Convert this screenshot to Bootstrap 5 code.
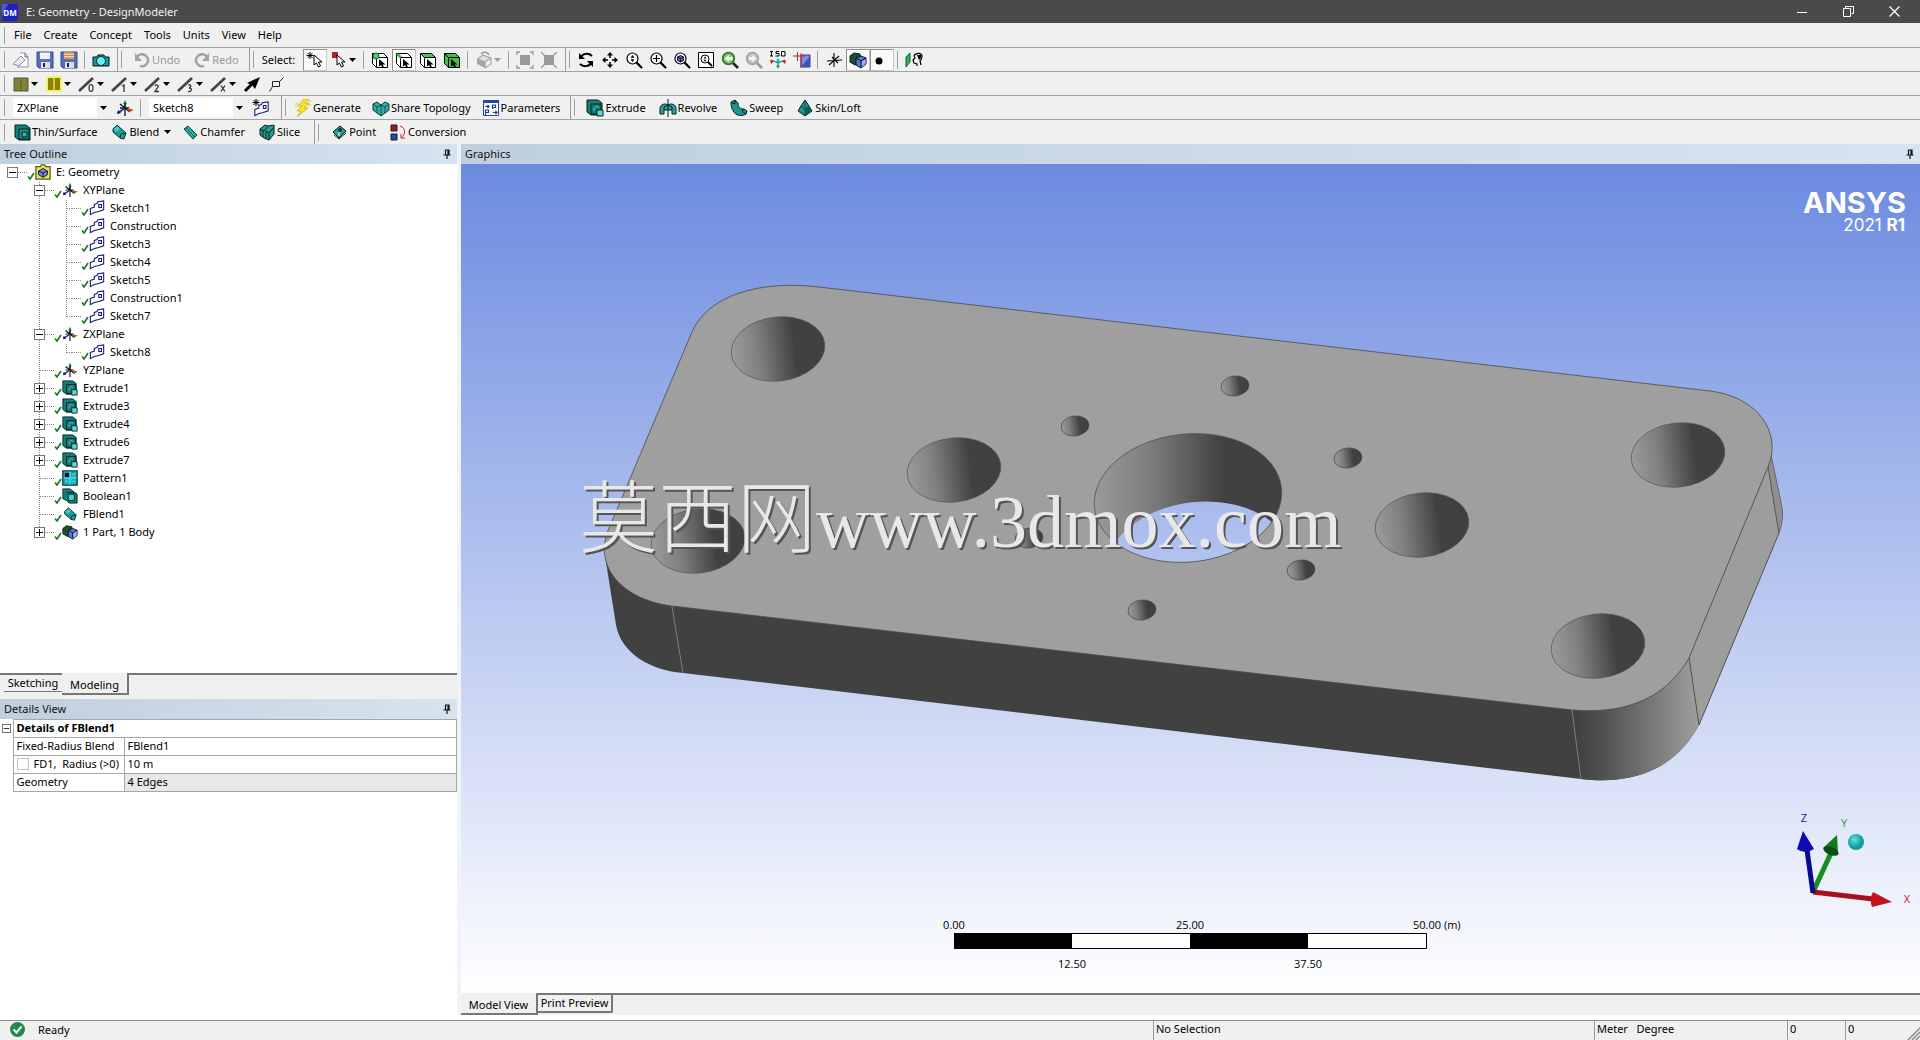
<!DOCTYPE html>
<html lang="en">
<head>
<meta charset="utf-8">
<meta name="viewport" content="width=device-width, initial-scale=1">
<title>E: Geometry - DesignModeler</title>
<link href="https://cdn.jsdelivr.net/npm/bootstrap@5.3.0/dist/css/bootstrap.min.css" rel="stylesheet">
<style>
  body{font:11px/16px "Noto Sans","Open Sans",sans-serif;color:#000;background:#fff;overflow:hidden}
  svg{display:block;flex:none}
  .ic{width:18px;height:18px}
  .titlebar{height:23px;background:#4a4a4a;color:#f2f2f2;padding:0 3px 0 2px}
  .winbtn{width:46px;height:23px;border:0;background:none;color:#fff;padding:0}
  .bar{height:24px;background:#f0f0f0;border-bottom:1px solid #a3a3a3}
  .bar.menubar{height:25px}
  .bar.lastbar{border-bottom:0}
  .grp{border-left:1px solid #9c9c9c;height:100%;padding-right:4px}
  .grp.first{border-left:1px solid #f0f0f0}
  .grp::before{content:"";width:8px;height:17px;flex:none;
    background:linear-gradient(#a0a0a0,#a0a0a0) 3px 0/1px 100% no-repeat}
  .grp.last{flex-grow:1}
  .vsep{width:8px;height:18px;flex:none;background:linear-gradient(#a0a0a0,#a0a0a0) 3px 0/1px 100% no-repeat}
  .menubar a{color:#000;text-decoration:none}
  .menubar .items{gap:12px;padding-left:5px}
  .tb{border:0;background:none;color:#000;padding:0;height:22px;width:24px;display:flex;align-items:center;justify-content:center;flex:none}
  .tb.pressed{background:#fafafa;border:1px solid #c8c8c8;border-top-color:#8f8f8f;border-left-color:#8f8f8f}
  .tb.drop{width:33px;justify-content:flex-start;padding-left:3px;gap:1px}
  .tb.txt{width:auto;padding:0 6px 0 5px;gap:1px;white-space:nowrap}
  .wide .tb.txt{padding-left:7px}
  .wide .tb.first-txt,.tb.first-txt{padding-left:4px}
  .tb:disabled{color:#9a9a9a}
  .caret{width:7px;height:4px}
  .combo{height:19px;border:0;border-radius:0;background:#fff;color:#000;appearance:none;padding:0 4px;width:84px}
  .combobox{background:#f0f0f0;gap:3px;width:96px}
  .panehead{height:20px;background:linear-gradient(90deg,#c0cfdd,#d6e4f2);padding:0 6px 0 4px;color:#111;flex:none}
  .mainrow{min-height:0}
  .leftpane{width:457px;flex:none}
  .split{width:4px;background:#f0f3fa;flex:none}
  .tree{min-height:0;overflow:hidden}
  .tree ul{list-style:none;margin:0;padding:0;position:relative}
  .tree ul ul{padding-left:27px}
  .tree ul ul::before{content:"";position:absolute;left:39px;top:0;bottom:9px;border-left:1px dotted #8a8a8a}
  .node{height:18px;padding-left:7px;padding-bottom:2px;position:relative}
  .pm{width:11px;height:11px;border:1px solid #777;background:#fff;padding:0;flex:none;display:flex}
  .leaf{width:6px;margin-left:5px;border-top:1px dotted #8a8a8a;flex:none}
  .dash{width:9px;border-top:1px dotted #8a8a8a;flex:none}
  .tick{width:8px;height:8px;margin-top:8px}
  .nic{width:16px;height:16px;margin:0 5px 0 0}
  .tabstrip{height:26px;background:#f0f0f0;flex:none}
  .tabx{border:0;background:#f0f0f0;color:#000;padding:0}
  .tabx.sk{width:62px;height:19px;border-top:2px solid #777;padding-left:4px}
  .tabx.sk span{display:block;border-bottom:1px solid #777;height:17px;line-height:15px}
  .tabx.mo{width:67px;height:22px;border-right:2px solid #777;border-bottom:2px solid #777;padding-top:4px}
  .fillline{border-top:2px solid #777}
  .details{height:316px;flex:none}
  .dtable{width:100%;table-layout:fixed;border-collapse:collapse}
  .dtable th,.dtable td{height:18px;padding:0 3px 1px;border:1px solid #a2a8a2;font-weight:400;white-space:nowrap;line-height:14px}
  .dtable td.gut{width:13px;border:0;padding:0 0 0 2px}
  .dtable .lab{width:111px}
  .dtable .pm{width:9px;height:9px}
  .dtable thead th.ttl{font-weight:700}
  .dtable td.readonly{background:#e8e8e8}
  .gutcol{width:13px}.labcol{width:111px}
  .ck{appearance:none;width:12px;height:12px;border:1px solid #c2c2c2;background:#fff;margin:0 5px 0 0;flex:none}
  .rightpane{min-width:0}
  .view{background:linear-gradient(#6c8be0,#ffffff);min-height:0;position:relative}
  .view>svg{width:100%;height:100%}
  .wmark{fill:#e8e8e8;text-shadow:2px 2px 0 #555}
  .vtabs{height:22px;background:#f0f0f0;flex:none}
  .tabx.mv{width:77px;height:22px;border-right:2px solid #777;border-bottom:2px solid #777;padding-top:4px}
  .tabx.pp{width:75px;height:20px;border:2px solid #777;border-left:0;border-radius:0 0 2px 0}
  .status{height:20px;background:#f0f0f0;border-top:1px solid #8c8c8c;margin-top:5px;flex:none}
  .ready{padding:0 0 2px 10px;gap:13px}
  .cell{height:100%;border-left:1px solid #9a9a9a;padding-left:2px;flex:none}
  .c-sel{width:441px}.c-unit{width:193px}.c-n{width:58px}.c-end{width:75px}
</style>
<script src="https://cdn.jsdelivr.net/npm/bootstrap@5.3.0/dist/js/bootstrap.bundle.min.js"></script>
</head>
<body>
<svg width="0" height="0" class="position-absolute" aria-hidden="true">
  <defs>
    <symbol id="caret" viewBox="0 0 7 4"><path d="M0 0h7L3.500 4z" fill="currentColor"/></symbol>
    <symbol id="new" viewBox="0 0 18 18"><path d="M8 2h5l3 4v10H5" fill="#fff" stroke="#8a8f9c"/><path d="M1 13 9 5l4 4-6 6-3-1z" fill="#e4e8f0" stroke="#8a8f9c"/><path d="M13 2v4h3" fill="none" stroke="#667"/></symbol>
    <symbol id="save" viewBox="0 0 18 18"><path d="M1 1h16v16H3l-2-2z" fill="#5870b8" stroke="#33488c"/><path d="M4 1.500h10V8H4z" fill="#eef2fb"/><path d="M5 11h9v6H5z" fill="#dde"/><path d="M7 12h2v4H7z" fill="#223"/></symbol>
    <symbol id="saveas" viewBox="0 0 18 18"><use href="#save"/><path d="M4 2h10M4 4.500h10M4 7h10" stroke="#d08a2c" stroke-width="1.500"/></symbol>
    <symbol id="cam" viewBox="0 0 18 18"><path d="M1 6h4l1-2h6l1 2h4v9H1z" fill="#159a9c" stroke="#111"/><circle cx="9" cy="10" r="4.500" fill="#62f0f0" stroke="#123"/></symbol>
    <symbol id="undo" viewBox="0 0 18 18"><path d="M4 6a6 6 0 1 1 3 9" fill="none" stroke="#a2a2a2" stroke-width="2.500"/><path d="M2 2v8h7z" fill="#a2a2a2"/></symbol>
    <symbol id="redo" viewBox="0 0 18 18"><path d="M14 6a6 6 0 1 0-3 9" fill="none" stroke="#a2a2a2" stroke-width="2.500"/><path d="M16 2v8H9z" fill="#a2a2a2"/></symbol>
    <symbol id="cur" viewBox="0 0 10 14"><path d="M1 1v10l2.500-2 2 4 2-1-2-4H9z" fill="#fff" stroke="#000"/></symbol>
    <symbol id="selnew" viewBox="0 0 18 18"><path d="M4 1v7M.500 4.500h7M1.500 2l5 5M6.500 2l-5 5" stroke="#000"/><use href="#cur" x="7" y="3" width="10" height="14"/></symbol>
    <symbol id="selred" viewBox="0 0 18 18"><path d="M2 1h6v6H2z" fill="#b02030"/><use href="#cur" x="6" y="3" width="10" height="14"/></symbol>
    <symbol id="wire" viewBox="0 0 18 18"><path d="M1.500 2.500h11l4 4v10h-11l-4-4zM1.500 2.500l4 4h11M5.500 6.500v10" fill="none" stroke="#000"/></symbol>
    <symbol id="curb" viewBox="0 0 7 9"><path d="M0 0v7.500L2 6l1.500 3 1.500-.800L3.700 5.500H6.500z" fill="#000"/></symbol>
    <symbol id="bx1" viewBox="0 0 18 18"><path d="M1.500 2.500h11l4 4v10h-11l-4-4z" fill="#fff"/><use href="#wire"/><circle cx="5" cy="5" r="3" fill="#5cc466" stroke="#063"/><use href="#curb" x="8" y="8" width="7" height="9"/></symbol>
    <symbol id="bx2" viewBox="0 0 18 18"><path d="M1.500 2.500h11l4 4v10h-11l-4-4z" fill="#fff"/><use href="#wire"/><path d="M2 3 6 6.500" stroke="#3fae4a" stroke-width="2.500"/><use href="#curb" x="8" y="8" width="7" height="9"/></symbol>
    <symbol id="bx3" viewBox="0 0 18 18"><path d="M1.500 2.500h11l4 4v10h-11l-4-4z" fill="#fff"/><path d="M1.500 2.500h11l4 4h-11z" fill="#4cc457"/><use href="#wire"/><use href="#curb" x="8" y="8" width="7" height="9"/></symbol>
    <symbol id="bx4" viewBox="0 0 18 18"><path d="M1.500 2.500h11l4 4v10h-11l-4-4z" fill="#3fc14b"/><use href="#wire"/><use href="#curb" x="8" y="8" width="7" height="9"/></symbol>
    <symbol id="gbox" viewBox="0 0 18 18"><path d="M2 8l6-4 8 3-6 4z" fill="#ddd" stroke="#999"/><path d="M2 8l8 3v6l-8-4zM16 7v6l-6 4v-6z" fill="#a5a5a5"/><path d="M10 11l6-4v6l-6 4z" fill="#eee" stroke="#999"/><path d="M6 3c3-3 7-2 8 1" stroke="#999" fill="none" stroke-width="1.500"/></symbol>
    <symbol id="ext1" viewBox="0 0 18 18"><path d="M4 4h10v10H4z" fill="#999"/><path d="M1 4V1h3M14 1h3v3M17 14v3h-3M4 17H1v-3" fill="none" stroke="#999" stroke-width="1.300"/></symbol>
    <symbol id="ext2" viewBox="0 0 18 18"><path d="M4 4h10v10H4z" fill="#999"/><path d="M1 1l4 4M17 1l-4 4M17 17l-4-4M1 17l4-4" stroke="#999" stroke-width="1.300"/></symbol>
    <symbol id="rot" viewBox="0 0 18 18"><path d="M4 6c2-4 8-4 11-1M14 12c-2 4-8 4-11 1" fill="none" stroke="#000" stroke-width="2"/><path d="M2 2v6h6zM16 16v-6h-6z"/></symbol>
    <symbol id="pan" viewBox="0 0 18 18"><path d="M9 3v4M9 11v4M3 9h4M11 9h4" stroke="#000" stroke-width="1.500"/><path d="M9 1l3 3.500H6zM9 17l3-3.500H6zM1 9l3.500-3v6zM17 9l-3.500-3v6z"/></symbol>
    <symbol id="lens" viewBox="0 0 18 18"><path d="M11 11l6 6" stroke="#000" stroke-width="2.300"/><circle cx="7.500" cy="7.500" r="5.500" fill="#fff" stroke="#000" stroke-width="1.200"/></symbol>
    <symbol id="z1" viewBox="0 0 18 18"><use href="#lens"/><path d="M7.500 4l2 2.800h-4zM7.500 11l2-2.800h-4z"/></symbol>
    <symbol id="z2" viewBox="0 0 18 18"><use href="#lens"/><path d="M7.500 4v7M4 7.500h7" stroke="#000" stroke-width="1.200"/></symbol>
    <symbol id="z3" viewBox="0 0 18 18"><use href="#lens"/><path d="M4.500 6l3-1.500 3 1.500v3.500l-3 1.500-3-1.500z" fill="#5a62c8" stroke="#112"/><path d="M4.500 6l3 1.500 3-1.500M7.500 8v3" fill="none" stroke="#112"/></symbol>
    <symbol id="z4" viewBox="0 0 18 18"><path d="M1.500 1.500h15v15h-15z" fill="#fff" stroke="#000"/><circle cx="8" cy="8" r="4" fill="none" stroke="#000"/><path d="M11 11l4 4" stroke="#000" stroke-width="1.800"/><path d="M8 5.500 9.500 7.600h-3zM8 10.800l1.500-2.100h-3z"/></symbol>
    <symbol id="z5" viewBox="0 0 18 18"><path d="M11 11l6 6" stroke="#223" stroke-width="2.600"/><circle cx="7.500" cy="7.500" r="5.800" fill="#7fce6a" stroke="#2f7a2a" stroke-width="1.800"/><path d="M3.500 7.500 8 4v2h3.500v3H8v2z" fill="#fff"/></symbol>
    <symbol id="z6" viewBox="0 0 18 18"><path d="M11 11l6 6" stroke="#999" stroke-width="2.600"/><circle cx="7.500" cy="7.500" r="5.800" fill="#c4c4c4" stroke="#a5a5a5" stroke-width="1.800"/><path d="M11.500 7.500 7 4v2H4v3h3v2z" fill="#f5f5f5"/></symbol>
    <symbol id="iso" viewBox="0 0 18 18"><path d="M2.500 0v5M1 .500h3M1 5h3M10 .500H7V2.500h3V5H6.500M12.500.500H16V5h-3.500z" fill="none" stroke="#000"/><path d="M9 17v-7M9 12 2 9M9 12l7-3" stroke="#188" stroke-width="1.200"/><path d="M7 14.500h4l-2 3z" fill="#1a9a8a"/><path d="M1 9l4 1-3 3zM17 9l-4 1 3 3z" fill="#c22"/><path d="M7 10l2-3 2 3-2 2z" fill="#2bb"/></symbol>
    <symbol id="look" viewBox="0 0 18 18"><path d="M8 4h9v12H8z" fill="#7d90e4" stroke="#223a90"/><path d="M8 16 17 5v11z" fill="#3f54b4"/><path d="M0 5h12M4.500 1v9M8 2v15" stroke="#c02020"/></symbol>
    <symbol id="star" viewBox="0 0 18 18"><path d="M9 2v14M2 10l15-1M4 14 14 5M7 6l6 6" stroke="#000" stroke-width="1.100"/></symbol>
    <symbol id="cubes" viewBox="0 0 18 18"><path d="M1 5l4-3 6 1 1 8-6 3-5-3z" fill="#234a34" stroke="#021"/><path d="M7 7l5-2 5 2v6l-5 4-5-3z" fill="#5a78d8" stroke="#012"/><path d="M12.500 10.500 16.500 8v5l-4 3z" fill="#9cb4f6"/><path d="M7 7l5 3 5-3M12 10v6" fill="none" stroke="#012"/></symbol>
    <symbol id="dot" viewBox="0 0 18 18"><circle cx="6" cy="10" r="3.500"/></symbol>
    <symbol id="mask" viewBox="0 0 18 18"><path d="M1 6l4-4v9l-4 5z" fill="#35b545" stroke="#064"/><path d="M9 5c1-3 8-4 8 0s-1 3-2 5l1 4M9 5l1 2-2 2 1 3 3 1v2" fill="none" stroke="#000" stroke-width="1.200"/><path d="M12 4h4v3l-2 2z"/></symbol>
    <symbol id="sq1" viewBox="0 0 18 18"><path d="M2 3h14v13H2z" fill="#80823c" stroke="#555a20"/><path d="M9 3v13" stroke="#5c5f22"/></symbol>
    <symbol id="sq2" viewBox="0 0 18 18"><path d="M1 1h16v16H1z" fill="#f4f06a"/><path d="M3 3h12v12H3z" fill="#8b8200"/><path d="M9 3v12" stroke="#e6df3c" stroke-width="1.500"/></symbol>
    <symbol id="slash" viewBox="0 0 18 18"><path d="M1 16 15 3" stroke="#444" stroke-width="2.600"/></symbol>
    <symbol id="s0" viewBox="0 0 18 18"><use href="#slash"/><ellipse cx="13" cy="13" rx="2" ry="3.500" fill="#f0f0f0" stroke="#333" stroke-width="1.200"/></symbol>
    <symbol id="s1" viewBox="0 0 18 18"><use href="#slash"/><path d="M11 11l2-1v7" fill="none" stroke="#333" stroke-width="1.300"/></symbol>
    <symbol id="s2" viewBox="0 0 18 18"><use href="#slash"/><path d="M11 11c1-2 4-1 3 1l-3 4.500h4" fill="none" stroke="#333" stroke-width="1.300"/></symbol>
    <symbol id="s3" viewBox="0 0 18 18"><use href="#slash"/><path d="M11 10c3-1 4 2 1 3 4 0 3 4-1 3.500" fill="none" stroke="#333" stroke-width="1.300"/></symbol>
    <symbol id="sx" viewBox="0 0 18 18"><use href="#slash"/><path d="M11 10.500l4 6M15 10.500l-4 6" stroke="#333" stroke-width="1.300"/></symbol>
    <symbol id="arr" viewBox="0 0 18 18"><path d="M2 16 9 9" stroke="#000" stroke-width="3"/><path d="M17 2 12 14 9 10 4 8z"/></symbol>
    <symbol id="vtx" viewBox="0 0 18 18"><path d="M5.500 6.500h7v5h-7zM12.500 6.500l4-4M5.500 11.500l-3 5" fill="none" stroke="#222"/></symbol>
    <symbol id="axes" viewBox="0 0 18 18"><path d="M9 9V2" stroke="#2c9a4a" stroke-width="2"/><path d="M9 1l2 4H7z" fill="#2c9a4a"/><path d="M4 5l10 8M9 4v13M4 9h9" stroke="#111" stroke-width="1.300"/><path d="M9 9l-7 5" stroke="#22308a" stroke-width="1.600"/><path d="M1 15l1-4 3 3z" fill="#111a60"/><path d="M12 9l6 2-5 2z" fill="#cc4422"/></symbol>
    <symbol id="sketch" viewBox="0 0 18 18"><path d="M1.500 9.500 6 8V5l3-1 1-2 6.500-1v10L11 13l-5 1-4.500 2.500z" fill="#fff" stroke="#16167c" stroke-width="1.200"/><path d="M11 5h3v3.500h-3z" fill="none" stroke="#16167c" stroke-width="1.200"/></symbol>
    <symbol id="newsk" viewBox="0 0 18 18"><use href="#sketch" x="1" y="2" width="17" height="16"/><path d="M4 0v7M.500 3.500h7M1.500 1l5 5M6.500 1l-5 5" stroke="#000"/></symbol>
    <symbol id="gen" viewBox="0 0 18 18"><path d="M10 0 4 7h4l-5 5h4l-4 6 11-9h-4l5-5h-4l4-4z" fill="#fbe522" stroke="#b89a00" stroke-width=".6"/><path d="M14 2h3M14 6h3M1 5h3M1 8h2" stroke="#d8c41a"/></symbol>
    <symbol id="share" viewBox="0 0 18 18"><path d="M1 5l4-2 4 3 4-3 4 2v6l-8 6-8-6z" fill="#3aaca6" stroke="#053a38"/><path d="M1 5l4 3 4-2 4 2 4-3M9 6v11M5 8v6M13 8v6" stroke="#053a38" fill="none" stroke-width=".8"/></symbol>
    <symbol id="par" viewBox="0 0 18 18"><path d="M1.500 1.500h15v15h-15z" fill="#fff" stroke="#1e4a9c"/><path d="M1 1h16v3H1z" fill="#1e4a9c"/><path d="M10.500 10V6h3v2.500h-3M3.500 16v-5h3v2.500h-3M3 7.500h4M5.500 6 7 7.500 5.500 9M11 13.500h4M13.500 12l1.500 1.500-1.500 1.500" fill="none" stroke="#123c8c" stroke-width="1.200"/></symbol>
    <symbol id="extr" viewBox="0 0 18 18"><path d="M1 1h11l4 3v12H5l-4-3z" fill="#12807a" stroke="#022"/><path d="M5 5h10v10H5z" fill="#157873" stroke="#022"/><path d="M8 12V9l3-2 2 2" fill="none" stroke="#5cc8d8"/><path d="M11 11h6v6h-6z" fill="#66d4d2" stroke="#022"/></symbol>
    <symbol id="rev" viewBox="0 0 18 18"><path d="M1 10c0-5 5-6 8-4 3-2 8-1 8 4v5h-4v-4H5v4H1z" fill="#2fa39c" stroke="#022"/><path d="M9 0v18" stroke="#022"/><path d="M5 11V8l4-2 4 2v3" stroke="#022" fill="none"/></symbol>
    <symbol id="swp" viewBox="0 0 18 18"><path d="M1 3l4-2 3 3c0 4 2 6 6 6l3 2-1 3c-7 4-15 0-15-12z" fill="#1f938c" stroke="#022"/><path d="M5 1v4L2 4M14 10l-2 2 4 3" fill="none" stroke="#022"/></symbol>
    <symbol id="skin" viewBox="0 0 18 18"><path d="M9 1l4 6 3 5-7 5-7-5 3-5z" fill="#1f938c" stroke="#022"/><path d="M9 10l4-3 3 5-7 5z" fill="#0d605c"/><path d="M9 1v16M5 7l4 3 4-3" stroke="#055" fill="none"/></symbol>
    <symbol id="thin" viewBox="0 0 18 18"><path d="M2 2h11l4 3v12H6l-4-3z" fill="#12807a" stroke="#022"/><path d="M6 6h10v10H6z" fill="#1f938c" stroke="#022"/><path d="M9 9h5v5H9z" fill="#3aaca6" stroke="#022"/></symbol>
    <symbol id="blend" viewBox="0 0 18 18"><path d="M3 6l4-4 9 8-2 6-4-1-7-6z" fill="#1f9c94" stroke="#033"/><path d="M4 6l3-3 3 3-4 3z" fill="#4cc8be"/><path d="M10 15l1-4 5-1" fill="none" stroke="#033"/></symbol>
    <symbol id="cham" viewBox="0 0 18 18"><path d="M3 6l4-3 9 9-4 4z" fill="#2cae9e" stroke="#044"/><path d="M5 5l9 9" stroke="#0a6a60"/></symbol>
    <symbol id="slice" viewBox="0 0 18 18"><path d="M2 6l5-4 3 1 6-1v9l-5 6-5-2-4-3z" fill="#2a9c94" stroke="#022"/><path d="M2 6l4 2 4-5M5 8v6M8 8l3 2 5-6M8 8v7M11 10v6" fill="none" stroke="#022"/></symbol>
    <symbol id="pt" viewBox="0 0 18 18"><path d="M3 9 10 3l6 5-7 7z" fill="#2a9c96" stroke="#022"/><path d="M4 12l5 4 7-6" fill="none" stroke="#333"/><circle cx="10" cy="7" r="2" fill="#134"/><path d="M9 9v4" stroke="#fff"/></symbol>
    <symbol id="conv" viewBox="0 0 18 18"><path d="M2 2h6v6H2z" fill="#8c1f2e" stroke="#411"/><path d="M2 11h6v6H2z" fill="#1c4f9a" stroke="#124"/><path d="M11 3c6 2 6 8 1 12M12 11v4h4" fill="none" stroke="#d02030"/></symbol>
    <symbol id="root" viewBox="0 0 18 18"><path d="M1 3h5l1-2h4l1 2h5v14H1z" fill="#e8e25a" stroke="#555a20" stroke-width="1.400"/><path d="M4 8l5-3 5 3v4l-5 3-5-3z" fill="#7d86de" stroke="#112"/><path d="M4 8l5 2 5-2M9 10v5" fill="none" stroke="#112"/></symbol>
    <symbol id="patt" viewBox="0 0 18 18"><path d="M1 1h16v16H1z" fill="#35d8d8" stroke="#034" stroke-width="1.500"/><path d="M3 3h5v5H3z" fill="#012"/><path d="M11 3h4v4h-4zM3 11h4v4H3zM11 11h4v4h-4z" fill="none" stroke="#078" stroke-dasharray="2 1"/></symbol>
    <symbol id="bool" viewBox="0 0 18 18"><path d="M1 1h8l4 3 4 3v10H8l-3-3-4-2z" fill="#12807a" stroke="#022"/><path d="M5 5h8v9" fill="none" stroke="#022"/><path d="M7 7h7v7H7z" fill="#40d4d0" stroke="#022"/></symbol>
    <symbol id="tick" viewBox="0 0 8 8"><path d="M1 4.500 3 7l4-6" fill="none" stroke="#1e7d28" stroke-width="1.700"/></symbol>
    <symbol id="pin" viewBox="0 0 8 10"><path d="M2 1h4v5M2.500 1v5M0.500 6h7M4 6v4M5 1v5" fill="none" stroke="#111" stroke-width="1.200"/></symbol>
    <symbol id="minus" viewBox="0 0 9 9"><path d="M1 4.500h7" stroke="#000"/></symbol>
    <symbol id="plus" viewBox="0 0 9 9"><path d="M1 4.500h7M4.500 1v7" stroke="#000"/></symbol>
  </defs>
</svg>
<div class="vh-100 d-flex flex-column">
  <header class="titlebar d-flex align-items-center">
    <svg width="16" height="18" viewBox="0 0 16 18"><path d="M0 1h16v15l-3 2H2l-2-3z" fill="#1c22c4"/><path d="M0 1h6l-4 8-2 5z" fill="#4a58ea"/><text x="8" y="13" text-anchor="middle" font-size="8" font-weight="700" fill="#fff" font-family="Open Sans,sans-serif">DM</text></svg>
    <span class="ms-1 ps-1">E: Geometry - DesignModeler</span>
    <div class="ms-auto d-flex">
      <button class="winbtn" aria-label="Minimize"><svg class="mx-auto" width="10" height="10"><path d="M0 5.500h10" stroke="#fff"/></svg></button>
      <button class="winbtn" aria-label="Restore"><svg class="mx-auto" width="11" height="11"><path d="M.5 2.500h7v8h-7zM2.500 2.500v-2h8v7h-2" fill="none" stroke="#fff"/></svg></button>
      <button class="winbtn" aria-label="Close"><svg class="mx-auto" width="11" height="11"><path d="M.5.5l10 10M10.500.5l-10 10" stroke="#fff" stroke-width="1.300"/></svg></button>
    </div>
  </header>
  <nav class="bar menubar d-flex align-items-center">
    <div class="grp first last d-flex align-items-center">
      <div class="items d-flex"><a href="#">File</a><a href="#">Create</a><a href="#">Concept</a><a href="#">Tools</a><a href="#">Units</a><a href="#">View</a><a href="#">Help</a></div>
    </div>
  </nav>
  <div class="bar d-flex align-items-center" role="toolbar" aria-label="Standard">
    <div class="grp first d-flex align-items-center">
      <button class="tb" aria-label="New"><svg class="ic"><use href="#new"/></svg></button>
      <button class="tb" aria-label="Save"><svg class="ic"><use href="#save"/></svg></button>
      <button class="tb" aria-label="Export"><svg class="ic"><use href="#saveas"/></svg></button>
      <span class="vsep"></span>
      <button class="tb" aria-label="Image capture"><svg class="ic"><use href="#cam"/></svg></button>
    </div>
    <div class="grp wide d-flex align-items-center">
      <button class="tb txt" disabled><svg class="ic"><use href="#undo"/></svg>Undo</button>
      <button class="tb txt" disabled><svg class="ic"><use href="#redo"/></svg>Redo</button>
    </div>
    <div class="grp d-flex align-items-center">
      <span class="pe-1 me-1 ps-1">Select:</span>
      <button class="tb pressed" aria-label="New selection"><svg class="ic"><use href="#selnew"/></svg></button>
      <button class="tb drop" aria-label="Select mode"><svg class="ic"><use href="#selred"/></svg><svg class="caret"><use href="#caret"/></svg></button>
      <span class="vsep"></span>
      <button class="tb" aria-label="Points"><svg class="ic"><use href="#bx1"/></svg></button>
      <button class="tb pressed" aria-label="Edges"><svg class="ic"><use href="#bx2"/></svg></button>
      <button class="tb" aria-label="Faces"><svg class="ic"><use href="#bx3"/></svg></button>
      <button class="tb" aria-label="Bodies"><svg class="ic"><use href="#bx4"/></svg></button>
      <span class="vsep"></span>
      <button class="tb drop" disabled aria-label="Extend selection"><svg class="ic"><use href="#gbox"/></svg><svg class="caret"><use href="#caret"/></svg></button>
      <span class="vsep"></span>
      <button class="tb" disabled aria-label="Expand"><svg class="ic"><use href="#ext1"/></svg></button>
      <button class="tb" disabled aria-label="Shrink"><svg class="ic"><use href="#ext2"/></svg></button>
    </div>
    <div class="grp last d-flex align-items-center">
      <button class="tb" aria-label="Rotate"><svg class="ic"><use href="#rot"/></svg></button>
      <button class="tb" aria-label="Pan"><svg class="ic"><use href="#pan"/></svg></button>
      <button class="tb" aria-label="Zoom"><svg class="ic"><use href="#z1"/></svg></button>
      <button class="tb" aria-label="Box zoom"><svg class="ic"><use href="#z2"/></svg></button>
      <button class="tb" aria-label="Zoom to fit"><svg class="ic"><use href="#z3"/></svg></button>
      <button class="tb" aria-label="Magnifier"><svg class="ic"><use href="#z4"/></svg></button>
      <button class="tb" aria-label="Previous view"><svg class="ic"><use href="#z5"/></svg></button>
      <button class="tb" disabled aria-label="Next view"><svg class="ic"><use href="#z6"/></svg></button>
      <button class="tb" aria-label="Isometric view"><svg class="ic"><use href="#iso"/></svg></button>
      <button class="tb" aria-label="Look at"><svg class="ic"><use href="#look"/></svg></button>
      <span class="vsep"></span>
      <button class="tb" aria-label="Display plane"><svg class="ic"><use href="#star"/></svg></button>
      <button class="tb pressed" aria-label="Display model"><svg class="ic"><use href="#cubes"/></svg></button>
      <button class="tb pressed" aria-label="Display points"><svg class="ic"><use href="#dot"/></svg></button>
      <span class="vsep"></span>
      <button class="tb" aria-label="Look at face"><svg class="ic"><use href="#mask"/></svg></button>
    </div>
  </div>
  <div class="bar d-flex align-items-center" role="toolbar" aria-label="Display">
    <div class="grp first last d-flex align-items-center">
      <button class="tb drop" aria-label="Face color"><svg class="ic"><use href="#sq1"/></svg><svg class="caret"><use href="#caret"/></svg></button>
      <button class="tb drop" aria-label="Edge color"><svg class="ic"><use href="#sq2"/></svg><svg class="caret"><use href="#caret"/></svg></button>
      <button class="tb drop" aria-label="Free edges"><svg class="ic"><use href="#s0"/></svg><svg class="caret"><use href="#caret"/></svg></button>
      <button class="tb drop" aria-label="Single edges"><svg class="ic"><use href="#s1"/></svg><svg class="caret"><use href="#caret"/></svg></button>
      <button class="tb drop" aria-label="Double edges"><svg class="ic"><use href="#s2"/></svg><svg class="caret"><use href="#caret"/></svg></button>
      <button class="tb drop" aria-label="Triple edges"><svg class="ic"><use href="#s3"/></svg><svg class="caret"><use href="#caret"/></svg></button>
      <button class="tb drop" aria-label="Multiple edges"><svg class="ic"><use href="#sx"/></svg><svg class="caret"><use href="#caret"/></svg></button>
      <button class="tb" aria-label="Edge direction"><svg class="ic"><use href="#arr"/></svg></button>
      <button class="tb" aria-label="Vertices"><svg class="ic"><use href="#vtx"/></svg></button>
    </div>
  </div>
  <div class="bar d-flex align-items-center" role="toolbar" aria-label="Planes and features">
    <div class="grp first d-flex align-items-center">
      <div class="combobox d-flex align-items-center ms-1"><select class="combo" aria-label="Active plane"><option>ZXPlane</option><option>XYPlane</option><option>YZPlane</option></select><svg class="caret"><use href="#caret"/></svg></div>
      <button class="tb ms-1" aria-label="New plane"><svg class="ic"><use href="#axes"/></svg></button>
      <span class="vsep"></span>
      <div class="combobox d-flex align-items-center ms-1"><select class="combo" aria-label="Active sketch"><option>Sketch8</option><option>Sketch7</option></select><svg class="caret"><use href="#caret"/></svg></div>
      <button class="tb ms-1" aria-label="New sketch"><svg class="ic"><use href="#newsk"/></svg></button>
    </div>
    <div class="grp ms-1 d-flex align-items-center">
      <button class="tb txt first-txt"><svg class="ic"><use href="#gen"/></svg>Generate</button>
      <button class="tb txt"><svg class="ic"><use href="#share"/></svg>Share Topology</button>
      <button class="tb txt"><svg class="ic"><use href="#par"/></svg>Parameters</button>
    </div>
    <div class="grp last wide d-flex align-items-center">
      <button class="tb txt"><svg class="ic"><use href="#extr"/></svg>Extrude</button>
      <button class="tb txt"><svg class="ic"><use href="#rev"/></svg>Revolve</button>
      <button class="tb txt"><svg class="ic"><use href="#swp"/></svg>Sweep</button>
      <button class="tb txt"><svg class="ic"><use href="#skin"/></svg>Skin/Loft</button>
    </div>
  </div>
  <div class="bar lastbar wide d-flex align-items-center" role="toolbar" aria-label="Modify">
    <div class="grp first d-flex align-items-center">
      <button class="tb txt first-txt"><svg class="ic"><use href="#thin"/></svg>Thin/Surface</button>
      <button class="tb txt"><svg class="ic"><use href="#blend"/></svg>Blend<svg class="caret ms-1"><use href="#caret"/></svg></button>
      <button class="tb txt first-txt"><svg class="ic"><use href="#cham"/></svg>Chamfer</button>
      <button class="tb txt"><svg class="ic"><use href="#slice"/></svg>Slice</button>
    </div>
    <div class="grp ms-1 last d-flex align-items-center">
      <button class="tb txt"><svg class="ic"><use href="#pt"/></svg>Point</button>
      <button class="tb txt"><svg class="ic"><use href="#conv"/></svg>Conversion</button>
    </div>
  </div>

  <main class="mainrow d-flex flex-grow-1">
    <aside class="leftpane d-flex flex-column">
      <div class="panehead d-flex align-items-center justify-content-between"><span>Tree Outline</span><svg width="8" height="10"><use href="#pin"/></svg></div>
      <div class="tree flex-grow-1">
        <ul>
          <li>
            <div class="node d-flex align-items-center"><button class="pm" aria-label="Collapse"><svg width="9" height="9"><use href="#minus"/></svg></button><span class="dash"></span><svg class="tick"><use href="#tick"/></svg><svg class="nic"><use href="#root"/></svg>E: Geometry</div>
            <ul>
              <li>
                <div class="node d-flex align-items-center"><button class="pm" aria-label="Collapse"><svg width="9" height="9"><use href="#minus"/></svg></button><span class="dash"></span><svg class="tick"><use href="#tick"/></svg><svg class="nic"><use href="#axes"/></svg>XYPlane</div>
                <ul>
                  <li class="node d-flex align-items-center"><span class="leaf"></span><span class="dash"></span><svg class="tick"><use href="#tick"/></svg><svg class="nic"><use href="#sketch"/></svg>Sketch1</li>
                  <li class="node d-flex align-items-center"><span class="leaf"></span><span class="dash"></span><svg class="tick"><use href="#tick"/></svg><svg class="nic"><use href="#sketch"/></svg>Construction</li>
                  <li class="node d-flex align-items-center"><span class="leaf"></span><span class="dash"></span><svg class="tick"><use href="#tick"/></svg><svg class="nic"><use href="#sketch"/></svg>Sketch3</li>
                  <li class="node d-flex align-items-center"><span class="leaf"></span><span class="dash"></span><svg class="tick"><use href="#tick"/></svg><svg class="nic"><use href="#sketch"/></svg>Sketch4</li>
                  <li class="node d-flex align-items-center"><span class="leaf"></span><span class="dash"></span><svg class="tick"><use href="#tick"/></svg><svg class="nic"><use href="#sketch"/></svg>Sketch5</li>
                  <li class="node d-flex align-items-center"><span class="leaf"></span><span class="dash"></span><svg class="tick"><use href="#tick"/></svg><svg class="nic"><use href="#sketch"/></svg>Construction1</li>
                  <li class="node d-flex align-items-center"><span class="leaf"></span><span class="dash"></span><svg class="tick"><use href="#tick"/></svg><svg class="nic"><use href="#sketch"/></svg>Sketch7</li>
                </ul>
              </li>
              <li>
                <div class="node d-flex align-items-center"><button class="pm" aria-label="Collapse"><svg width="9" height="9"><use href="#minus"/></svg></button><span class="dash"></span><svg class="tick"><use href="#tick"/></svg><svg class="nic"><use href="#axes"/></svg>ZXPlane</div>
                <ul>
                  <li class="node d-flex align-items-center"><span class="leaf"></span><span class="dash"></span><svg class="tick"><use href="#tick"/></svg><svg class="nic"><use href="#sketch"/></svg>Sketch8</li>
                </ul>
              </li>
              <li class="node d-flex align-items-center"><span class="leaf"></span><span class="dash"></span><svg class="tick"><use href="#tick"/></svg><svg class="nic"><use href="#axes"/></svg>YZPlane</li>
              <li class="node d-flex align-items-center"><button class="pm" aria-label="Expand"><svg width="9" height="9"><use href="#plus"/></svg></button><span class="dash"></span><svg class="tick"><use href="#tick"/></svg><svg class="nic"><use href="#extr"/></svg>Extrude1</li>
              <li class="node d-flex align-items-center"><button class="pm" aria-label="Expand"><svg width="9" height="9"><use href="#plus"/></svg></button><span class="dash"></span><svg class="tick"><use href="#tick"/></svg><svg class="nic"><use href="#extr"/></svg>Extrude3</li>
              <li class="node d-flex align-items-center"><button class="pm" aria-label="Expand"><svg width="9" height="9"><use href="#plus"/></svg></button><span class="dash"></span><svg class="tick"><use href="#tick"/></svg><svg class="nic"><use href="#extr"/></svg>Extrude4</li>
              <li class="node d-flex align-items-center"><button class="pm" aria-label="Expand"><svg width="9" height="9"><use href="#plus"/></svg></button><span class="dash"></span><svg class="tick"><use href="#tick"/></svg><svg class="nic"><use href="#extr"/></svg>Extrude6</li>
              <li class="node d-flex align-items-center"><button class="pm" aria-label="Expand"><svg width="9" height="9"><use href="#plus"/></svg></button><span class="dash"></span><svg class="tick"><use href="#tick"/></svg><svg class="nic"><use href="#extr"/></svg>Extrude7</li>
              <li class="node d-flex align-items-center"><span class="leaf"></span><span class="dash"></span><svg class="tick"><use href="#tick"/></svg><svg class="nic"><use href="#patt"/></svg>Pattern1</li>
              <li class="node d-flex align-items-center"><span class="leaf"></span><span class="dash"></span><svg class="tick"><use href="#tick"/></svg><svg class="nic"><use href="#bool"/></svg>Boolean1</li>
              <li class="node d-flex align-items-center"><span class="leaf"></span><span class="dash"></span><svg class="tick"><use href="#tick"/></svg><svg class="nic"><use href="#blend"/></svg>FBlend1</li>
              <li class="node d-flex align-items-center"><button class="pm" aria-label="Expand"><svg width="9" height="9"><use href="#plus"/></svg></button><span class="dash"></span><svg class="tick"><use href="#tick"/></svg><svg class="nic"><use href="#cubes"/></svg>1 Part, 1 Body</li>
            </ul>
          </li>
        </ul>
      </div>
      <div class="tabstrip d-flex align-items-start">
        <button class="tabx sk"><span>Sketching</span></button>
        <button class="tabx mo">Modeling</button>
        <div class="fillline flex-grow-1"></div>
      </div>
      <section class="details">
        <div class="panehead d-flex align-items-center justify-content-between"><span>Details View</span><svg width="8" height="10"><use href="#pin"/></svg></div>
        <table class="dtable">
          <colgroup><col class="gutcol"><col class="labcol"><col></colgroup>
          <thead><tr><td class="gut"><button class="pm" aria-label="Collapse"><svg width="7" height="7"><use href="#minus"/></svg></button></td><th class="ttl" colspan="2">Details of FBlend1</th></tr></thead>
          <tbody>
            <tr><td class="gut"></td><th class="lab" scope="row">Fixed-Radius Blend</th><td>FBlend1</td></tr>
            <tr><td class="gut"></td><th class="lab" scope="row"><label class="d-flex align-items-center" for="fd1"><input class="ck" type="checkbox" id="fd1">FD1,&nbsp; Radius (&gt;0)</label></th><td>10 m</td></tr>
            <tr><td class="gut"></td><th class="lab" scope="row">Geometry</th><td class="readonly">4 Edges</td></tr>
          </tbody>
        </table>
      </section>
    </aside>
    <div class="split"></div>
    <section class="rightpane flex-grow-1 d-flex flex-column">
      <div class="panehead d-flex align-items-center justify-content-between"><span>Graphics</span><svg width="8" height="10"><use href="#pin"/></svg></div>
      <div class="view flex-grow-1">
        <svg viewBox="461 164 1459 829" preserveAspectRatio="xMidYMid meet" font-family="Open Sans, Noto Sans, sans-serif" font-size="11">
          <defs>
            <linearGradient id="gbg" gradientUnits="userSpaceOnUse" x1="0" y1="164" x2="0" y2="993"><stop offset="0" stop-color="#6c8be0"/><stop offset="1" stop-color="#fff"/></linearGradient>
            <linearGradient id="gh"><stop offset="0" stop-color="#9c9c9c"/><stop offset=".3" stop-color="#7e7e7e"/><stop offset=".68" stop-color="#414141"/><stop offset="1" stop-color="#404040"/></linearGradient>
            <linearGradient id="gf" gradientUnits="userSpaceOnUse" x1="1576" y1="0" x2="1696" y2="0"><stop offset="0" stop-color="#414141"/><stop offset=".2" stop-color="#4e4e4e"/><stop offset="1" stop-color="#9c9c9c"/></linearGradient>
            <radialGradient id="gs" cx=".4" cy=".35"><stop offset="0" stop-color="#5fe0e0"/><stop offset="1" stop-color="#0f9a9c"/></radialGradient>
            <clipPath id="cb"><ellipse cx="1188" cy="498" rx="94" ry="64" transform="rotate(-6 1188 498)"/></clipPath>
            <g id="hole"><ellipse rx="47" ry="32" transform="rotate(-7)" fill="url(#gh)" stroke="#555" stroke-width=".7"/></g>
            <g id="pin0"><ellipse rx="14" ry="10" transform="rotate(-7)" fill="url(#gh)" stroke="#444" stroke-width=".7"/></g>
          </defs>
          <path d="M605 550 606 562 616 625C621 652 648 670 683 673L1581 779C1640 786 1678 764 1699 725L1779 533Q1785 517 1781 502L1771 455 1689 600 1572 650z" fill="#414141"/>
          <path d="M1572 710 1581 779C1640 786 1678 764 1699 725L1689 657z" fill="url(#gf)"/>
          <path d="M1689 657 1699 725 1779 533 1768 466z" fill="#9d9d9d" stroke="#444" stroke-width=".8"/>
          <path d="M1768 466 1779 533Q1785 517 1781 502L1771 455z" fill="#8f8f8f" stroke="#555" stroke-width=".6"/>
          <path d="M819 287 1710 391C1752 396 1778 425 1771 458L1768 467 1689 658C1668 694 1632 715 1572 710L672 606C625 600 595 570 607 533L692 332C708 295 760 280 819 287z" fill="#9f9f9f" stroke="#4a4a4a" stroke-width=".8"/>
          <path d="M672 606 683 673M1572 710 1581 779" stroke="#8d8d8d" stroke-width=".8"/>
          <use href="#hole" x="778" y="349"/><use href="#hole" x="954" y="470"/><use href="#hole" x="698" y="541"/>
          <use href="#hole" x="1678" y="455"/><use href="#hole" x="1422" y="525"/><use href="#hole" x="1598" y="646"/>
          <use href="#pin0" x="1075" y="426"/><use href="#pin0" x="1235" y="386"/><use href="#pin0" x="1029" y="538"/>
          <use href="#pin0" x="1142" y="610"/><use href="#pin0" x="1348" y="458"/><use href="#pin0" x="1301" y="570"/>
          <g clip-path="url(#cb)"><rect x="1090" y="430" width="196" height="140" fill="url(#gh)"/><ellipse cx="1199" cy="567" rx="94" ry="65" transform="rotate(-6 1199 567)" fill="url(#gbg)"/></g>
          <ellipse cx="1188" cy="498" rx="94" ry="64" transform="rotate(-6 1188 498)" fill="none" stroke="#555" stroke-width=".8"/>

          <text class="wmark" x="579" y="547" font-family="Noto Sans CJK SC, sans-serif" font-weight="300" font-size="79">莫西网<tspan font-family="Liberation Serif, serif" font-weight="400" font-size="74">www.3dmox.com</tspan></text>

          <g fill="#fff" text-anchor="end" font-family="Inter, sans-serif"><text x="1906" y="213" font-size="29" font-weight="700">ANSYS</text><text x="1905" y="231" font-size="17">2021 <tspan font-weight="700">R1</tspan></text></g>

          <g text-anchor="middle"><path d="M954.500 933.500h472v15h-472z" fill="#fff" stroke="#000"/><path d="M954 933h118v16H954zM1190 933h118v16h-118z"/>
            <text x="954" y="929">0.00</text><text x="1190" y="929">25.00</text><text x="1413" y="929" text-anchor="start">50.00 (m)</text><text x="1072" y="968">12.50</text><text x="1308" y="968">37.50</text></g>

          <path d="M1813 892 1831 853" stroke="#1a8a24" stroke-width="5"/><path d="M1837 835 1838 853Q1831 857 1823 848z" fill="#157a1e"/><ellipse cx="1831" cy="851" rx="8" ry="4" transform="rotate(22 1831 851)" fill="#0b4d12"/>
          <path d="M1813 892 1873 899" stroke="#a8101c" stroke-width="5"/><path d="M1892 902 1873 892Q1869 899 1872 907z" fill="#c4141e"/>
          <path d="M1813 893 1807 850" stroke="#0a0a8c" stroke-width="5"/><path d="M1803 831 1814 849Q1805 855 1797 849z" fill="#0b0bb4"/>
          <circle cx="1856" cy="842" r="8" fill="url(#gs)"/>
          <g text-anchor="middle"><text x="1804" y="822" fill="#22229a">Z</text><text x="1844" y="827" fill="#2a9a3c">Y</text><text x="1907" y="903" fill="#c42034">X</text></g>
        </svg>
      </div>
      <div class="vtabs d-flex align-items-start">
        <button class="tabx mv">Model View</button><button class="tabx pp">Print Preview</button><div class="fillline flex-grow-1"></div>
      </div>
    </section>
  </main>
  <footer class="status d-flex align-items-center">
    <div class="ready flex-grow-1 d-flex align-items-center"><svg width="15" height="15" viewBox="0 0 15 15"><circle cx="7.500" cy="7.500" r="7.500" fill="#1f8a4c"/><path d="M3.500 7.500l3 3 5-6" fill="none" stroke="#fff" stroke-width="2"/></svg>Ready</div>
    <div class="cell c-sel">No Selection</div><div class="cell c-unit">Meter&nbsp;&nbsp; Degree</div><div class="cell c-n">0</div>
    <div class="cell c-end d-flex justify-content-between"><span>0</span><svg class="align-self-end" width="13" height="13"><path d="M1 13 13 1M5 13l8-8M9 13l4-4" stroke="#8c8c8c" stroke-width="1.500"/></svg></div>
  </footer>
</div>
</body>
</html>
